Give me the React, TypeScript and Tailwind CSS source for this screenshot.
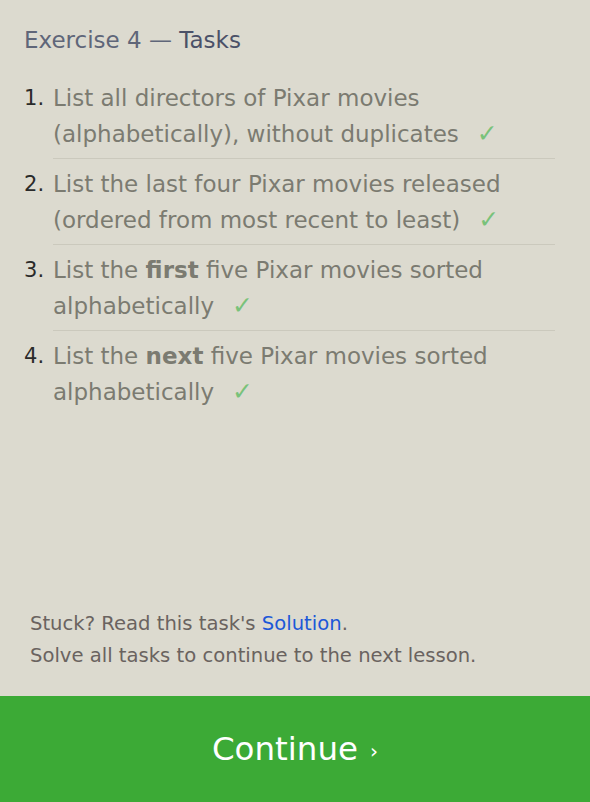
import React from "react";

// Lista de tarefas do exercício + rodapé com botão de continuar.
type Task = { id: number; parts: { text: string; bold?: boolean }[] };

const tasks: Task[] = [
  { id: 1, parts: [{ text: "List all directors of Pixar movies (alphabetically), without duplicates" }] },
  { id: 2, parts: [{ text: "List the last four Pixar movies released (ordered from most recent to least)" }] },
  {
    id: 3,
    parts: [{ text: "List the " }, { text: "first", bold: true }, { text: " five Pixar movies sorted alphabetically" }],
  },
  {
    id: 4,
    parts: [{ text: "List the " }, { text: "next", bold: true }, { text: " five Pixar movies sorted alphabetically" }],
  },
];

const font = "font-['DejaVu_Sans',sans-serif]";

export default function App() {
  return (
    <div className={`flex h-[802px] w-[590px] flex-col bg-[#dcdacf] ${font}`}>
      <div className="px-[24px] pt-[24px]">
        <h2 className="text-[23px] leading-[32px] text-[#5f6679]">
          Exercise 4 — <span className="text-[#4b5168]">Tasks</span>
        </h2>
        <ol className="mt-[24px] pr-[11px]">
          {tasks.map((t, i) => (
            <li key={t.id} className="flex">
              <span className="w-[29px] shrink-0 text-[21px] leading-[36px] text-[#2a2a2a]">{t.id}.</span>
              <div
                className={`flex-1 text-[23px] leading-[36px] text-[#7b7b71] ${
                  i < tasks.length - 1 ? "mb-[7px] border-b border-[#cbc9bd] pb-[6px]" : ""
                }`}
              >
                {t.parts.map((p, j) =>
                  p.bold ? (
                    <b key={j} className="font-bold">
                      {p.text}
                    </b>
                  ) : (
                    <span key={j}>{p.text}</span>
                  ),
                )}
                <span className="ml-[18px] text-[25px] text-[#79c27a]">✓</span>
              </div>
            </li>
          ))}
        </ol>
      </div>

      <div className="flex-1" />

      <div className="px-[30px] pb-[24px] text-[19.6px] leading-[32px] text-[#6a6360]">
        <p>
          Stuck? Read this task's <a className="text-[#1c58d8]">Solution</a>.
        </p>
        <p>Solve all tasks to continue to the next lesson.</p>
      </div>

      <button className="flex h-[106px] w-full items-center justify-center bg-[#3caa36] text-white">
        <span className="text-[32.5px]">Continue</span>
        <span className="ml-[12px] mt-[4px] text-[20px]">›</span>
      </button>
    </div>
  );
}
